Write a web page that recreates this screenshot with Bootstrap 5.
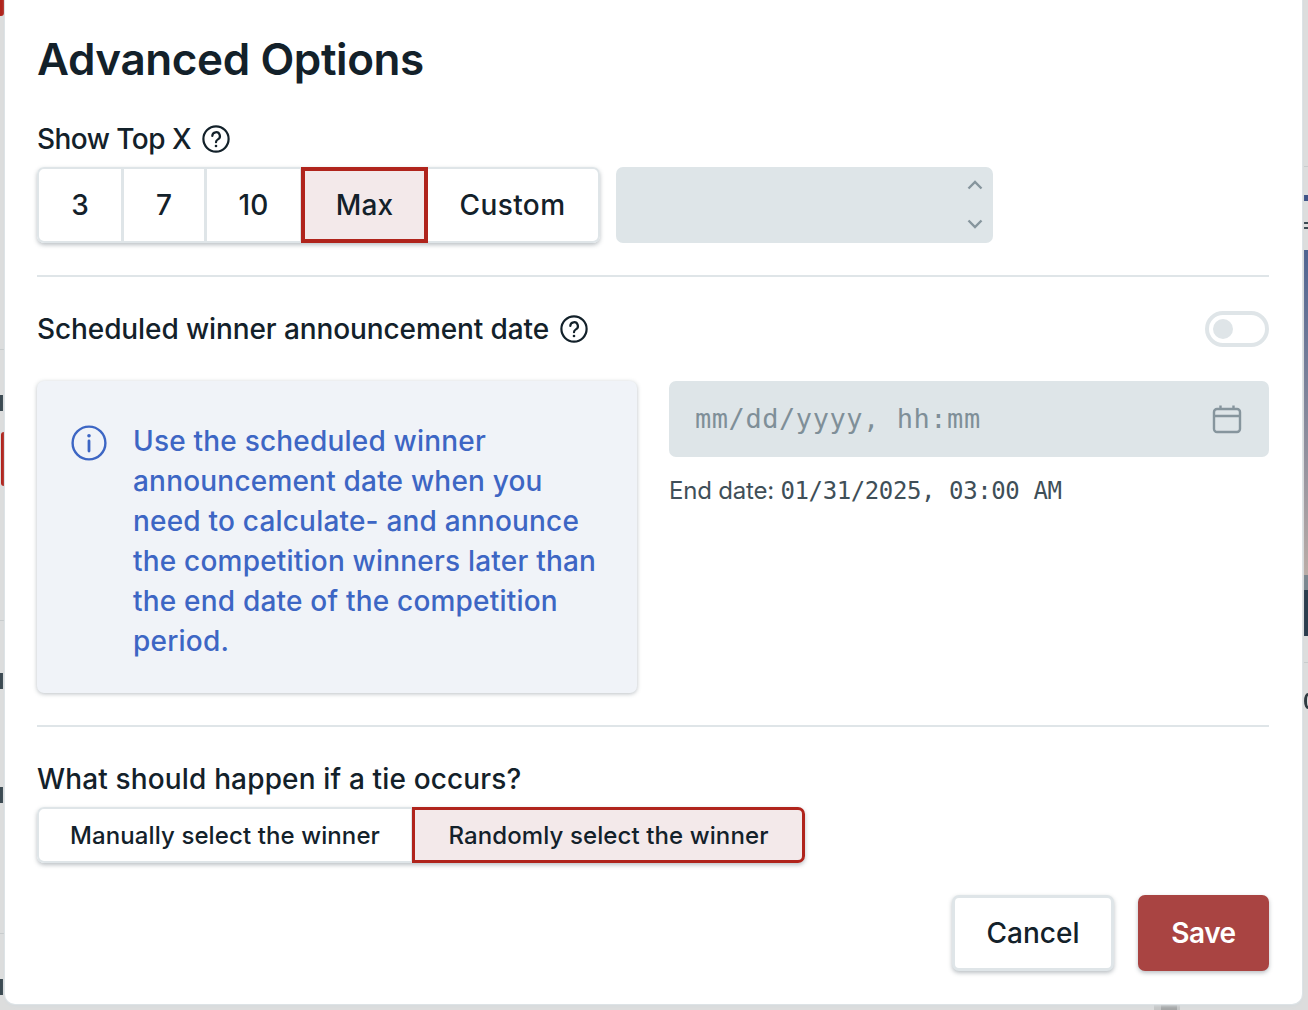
<!DOCTYPE html>
<html lang="en"><head><meta charset="utf-8"><title>Advanced Options</title>
<link href="https://cdn.jsdelivr.net/npm/bootstrap@5.3.0/dist/css/bootstrap.min.css" rel="stylesheet">
<script src="https://cdn.jsdelivr.net/npm/bootstrap@5.3.0/dist/js/bootstrap.bundle.min.js"></script>
<style>
html,body{height:100%;overflow:hidden}
body{background:#dcdddd;font-family:Inter,"Liberation Sans",sans-serif;color:#13212a}
.stage{position:relative;width:1308px;height:1010px;overflow:hidden}
.bgbit{position:absolute}
.sheet{position:absolute;left:5px;top:-10px;width:1297px;height:1014px;background:#fff;border-radius:0 0 10px 10px;box-shadow:0 0 0 1px #dde3e6,0 2px 3px #d5dadd;padding:10px 33px 0 32px}
.ttl{font-size:44px;font-weight:600;line-height:60px;margin:29px 0 0;letter-spacing:-.4px}
.lbl{font-size:28px;font-weight:500;line-height:38px;padding-bottom:2px;display:flex;align-items:center;gap:11px;margin:0}
.lbl-low{line-height:40px;padding-bottom:0}
.sp-a{letter-spacing:-.55px}.sp-b{letter-spacing:-.1px}.sp-c{letter-spacing:.15px}
.rule{height:2px;background:#dfe5e8;margin:0;opacity:1;border:0}
.seg{box-shadow:0 2px 4px rgba(60,75,85,.35);border-radius:7px;background:#fff}
.seg .btn{background:#fff;color:#13212a;border:2px solid #dfe5e8;border-radius:0;font-size:28px;font-weight:500;line-height:36px;padding:0;letter-spacing:.1px;display:flex;align-items:center;justify-content:center;flex:none}
.seg .btn:first-child{border-radius:7px 0 0 7px}
.seg .btn:last-child{border-radius:0 7px 7px 0}
.seg .btn.on{background:#f3e9ea;border:4px solid #b0241c;z-index:2}
.seg-a{height:76px;width:563px}
.seg-a .btn{height:76px}
.seg-a .w3{width:86px;margin:0}.seg-a .w7{width:84px;margin:0 0 0 -1px}.seg-a .w10{width:97px;margin:0 0 0 -1px}.seg-a .wmax{width:127px;margin:0 0 0 -2px}.seg-a .wcus{width:173px;margin:0 0 0 -1px;border-left:0;letter-spacing:.4px}
.seg-b{height:56px;width:768px;margin-top:8px}
.seg-b .btn{height:56px;font-size:24px;width:376px;margin:0;letter-spacing:.1px;padding-top:1px}
.seg-b .btn.on{width:393px;border-width:3.500px}
.numbox{width:377px;height:76px;background:#dee5e8;border-radius:7px;margin-left:16px;padding:13px 10px 14px;display:flex;flex-direction:column;align-items:flex-end;justify-content:space-between}
.tog{width:64px;height:36px;border:4px solid #dfe5e8;border-radius:18px;background:#fff;display:flex;align-items:center;padding-left:4px}
.tog i{width:20px;height:20px;border-radius:50%;background:#dfe5e8;display:block}
.note{width:600px;height:312px;background:#f0f3f8;border-radius:7px;box-shadow:0 1px 4px rgba(60,75,85,.35);color:#3d66c4;font-size:28px;font-weight:500;line-height:40px;padding:40px 32px 0 34px;display:flex;gap:26px;letter-spacing:.2px}
.note svg{flex:none;margin-top:4px}
.datebox{height:76px;background:#dee5e8;border-radius:7px;display:flex;align-items:center;justify-content:space-between;padding:0 27px 0 26px;color:#7f8f98;font-family:"DejaVu Sans Mono",monospace;font-size:27px;letter-spacing:.55px}
.endd{font-size:24px;color:#3f4f58;line-height:34px;margin-top:17px;letter-spacing:-.2px}
.endd span{font-family:"DejaVu Sans Mono",monospace;font-size:24px;letter-spacing:-.4px}
.acts .btn{height:76px;font-size:28px;font-weight:500;border-radius:7px;padding:0;box-shadow:0 2px 4px rgba(60,75,85,.35)}
.b-cancel{width:162px;background:#fff;border:3px solid #dfe5e8;color:#13212a}
.b-save{width:131px;background:#a94442;border:0;color:#fff;letter-spacing:-.5px}
.acts .b-save{font-weight:600}
.frag{background:#3c4a52;left:0;width:3px;height:16px}
</style></head><body>
<div class="stage">
<span class="bgbit" style="left:0;top:0;width:4px;height:16px;background:#b0241c;border-radius:0 0 3px 0"></span>
<span class="bgbit" style="left:1px;top:432px;width:3px;height:54px;background:#b0241c;border-radius:3px 0 0 3px"></span>
<span class="bgbit" style="left:0;top:349px;width:4px;height:1px;background:#c8cccd"></span>
<span class="bgbit" style="left:0;top:620px;width:4px;height:1px;background:#c8cccd"></span>
<span class="bgbit" style="left:0;top:933px;width:4px;height:1px;background:#c8cccd"></span>
<span class="bgbit frag" style="top:395px"></span>
<span class="bgbit frag" style="top:673px"></span>
<span class="bgbit frag" style="top:787px"></span>
<span class="bgbit frag" style="top:979px"></span>
<span class="bgbit" style="left:1304px;top:166px;width:4px;height:1px;background:#c8cccd"></span>
<span class="bgbit" style="left:1304px;top:195px;width:4px;height:6px;background:#3f5488"></span>
<span class="bgbit" style="left:1304px;top:222px;width:4px;height:7px;border-top:2px solid #3c4a52;border-bottom:2px solid #3c4a52"></span>
<span class="bgbit" style="left:1304px;top:250px;width:4px;height:325px;background:linear-gradient(#4f6491,#b9aca6)"></span>
<span class="bgbit" style="left:1304px;top:575px;width:4px;height:15px;background:#7b8790"></span>
<span class="bgbit" style="left:1304px;top:590px;width:4px;height:46px;background:#2b3d4e"></span>
<span class="bgbit" style="left:1304px;top:662px;width:4px;height:1px;background:#c8cccd"></span>
<span class="bgbit" style="left:1304px;top:693px;width:8px;height:16px;border:3px solid #2f3a41;border-radius:50%"></span>
<span class="bgbit" style="left:1154px;top:1004px;width:26px;height:6px;background:#c4c6c6"></span>
<span class="bgbit" style="left:1161px;top:1004px;width:16px;height:6px;background:#a4a6a6"></span>

<main class="sheet">
<h1 class="ttl">Advanced Options</h1>
<p class="lbl sp-a" style="margin-top:31px">Show Top X
<svg width="28" height="28" viewBox="0 0 28 28" fill="none" stroke="#13212a" stroke-width="2.2"><circle cx="14" cy="14" r="12.6"/><path d="M10.3 11a3.8 3.8 0 1 1 5.6 3.4c-1.2.7-1.9 1.4-1.9 2.8" stroke-linecap="round"/><circle cx="14" cy="21" r="1.3" fill="#13212a" stroke="none"/></svg></p>
<div class="d-flex" style="margin-top:7px">
 <div class="btn-group seg seg-a" role="group">
  <button class="btn w3" type="button">3</button><button class="btn w7" type="button">7</button><button class="btn w10" type="button">10</button><button class="btn on wmax" type="button">Max</button><button class="btn wcus" type="button">Custom</button>
 </div>
 <div class="numbox">
  <svg width="16" height="10" viewBox="0 0 16 10" fill="none" stroke="#86959d" stroke-width="2.4"><path d="M1.5 8.5 8 2l6.5 6.5"/></svg>
  <svg width="16" height="10" viewBox="0 0 16 10" fill="none" stroke="#86959d" stroke-width="2.4"><path d="M1.5 1.5 8 8l6.5-6.5"/></svg>
 </div>
</div>
<hr class="rule" style="margin-top:32px">
<div class="d-flex justify-content-between align-items-center" style="margin-top:32px">
 <p class="lbl lbl-low sp-b">Scheduled winner announcement date
 <svg width="28" height="28" viewBox="0 0 28 28" fill="none" stroke="#13212a" stroke-width="2.2"><circle cx="14" cy="14" r="12.6"/><path d="M10.3 11a3.8 3.8 0 1 1 5.6 3.4c-1.2.7-1.9 1.4-1.9 2.8" stroke-linecap="round"/><circle cx="14" cy="21" r="1.3" fill="#13212a" stroke="none"/></svg></p>
 <span class="tog"><i></i></span>
</div>
<div class="d-flex justify-content-between" style="margin-top:32px">
 <div class="note">
  <svg width="36" height="36" viewBox="0 0 36 36" fill="none" stroke="#3d66c4" stroke-width="2.4"><circle cx="18" cy="18" r="16.4"/><path d="M18 16v10" stroke-linecap="round" stroke-width="2.8"/><circle cx="18" cy="10.8" r="1.8" fill="#3d66c4" stroke="none"/></svg>
  <div>Use the scheduled winner announcement date when you need to calculate- and announce the competition winners later than the end date of the competition period.</div>
 </div>
 <div style="width:600px">
  <div class="datebox"><span>mm/dd/yyyy, hh:mm</span>
   <svg width="30" height="30" viewBox="0 0 30 30" fill="none" stroke="#86959d" stroke-width="2.4"><rect x="2" y="5" width="26" height="23" rx="3"/><path d="M2 12h26M8.500 1.500V5M21.500 1.500V5"/></svg>
  </div>
  <div class="endd">End date: <span>01/31/2025, 03:00 AM</span></div>
 </div>
</div>
<hr class="rule" style="margin-top:32px">
<p class="lbl lbl-low sp-c" style="margin-top:32px">What should happen if a tie occurs?</p>
<div class="btn-group seg seg-b" role="group">
 <button class="btn" type="button">Manually select the winner</button><button class="btn on" type="button">Randomly select the winner</button>
</div>
<div class="d-flex justify-content-end gap-4 acts" style="margin-top:32px">
 <button class="btn b-cancel" type="button">Cancel</button>
 <button class="btn b-save" type="button">Save</button>
</div>
</main>
</div>
</body></html>
